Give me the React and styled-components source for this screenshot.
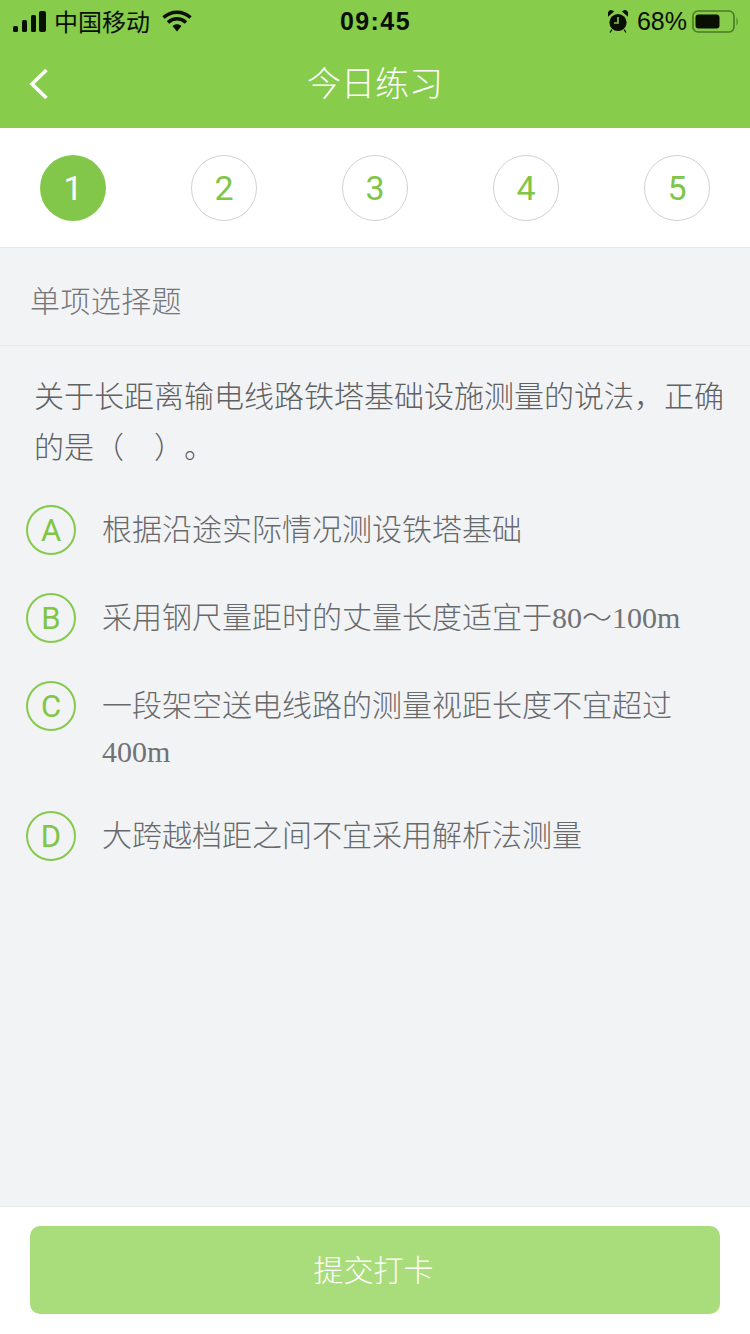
import React from "react";
import styled, { createGlobalStyle } from "styled-components";

const Global = createGlobalStyle`
  html, body { margin: 0; padding: 0; background: #f2f3f5; }
  * { box-sizing: border-box; }
  body { font-family: "Noto Sans CJK SC", "Liberation Sans", sans-serif; }
`;
const Page = styled.div`
  width: 750px; height: 1334px; display: flex; flex-direction: column; background: #f2f3f5; overflow: hidden;
`;
const Header = styled.header`
  height: 128px; background: #87cc4b; display: flex; flex-direction: column; flex: none;
`;
const StatusBar = styled.div`
  height: 40px; padding: 2px 12px 0 13px; display: flex; align-items: center; justify-content: space-between; color: #0a0f04;
`;
const StatusSide = styled.div`
  width: 300px; display: flex; align-items: center; gap: 5px; justify-content: ${p => p.$end ? "flex-end" : "flex-start"};
`;
const Carrier = styled.span`
  font-size: 24px; line-height: 32px; margin: 0 7px 0 3px;
`;
const Clock = styled.span`
  font-family: "Liberation Sans", sans-serif; font-size: 25px; font-weight: 700; letter-spacing: 1.4px; line-height: 32px;
`;
const Percent = styled.span`
  font-family: "Liberation Sans", sans-serif; font-size: 25px; line-height: 32px; margin-left: 4px;
`;
const NavBar = styled.div`
  height: 88px; display: grid; grid-template-columns: 100px 1fr 100px; align-items: center;
`;
const Back = styled.div`
  padding-left: 28px; display: flex; align-items: center; height: 40px;
`;
const Title = styled.h1`
  margin: -4px 0 0; text-align: center; color: #fff; font-size: 34px; font-weight: 300; line-height: 44px;
`;
const Steps = styled.nav`
  height: 120px; flex: none; background: #fff; border-bottom: 1px solid #e8e9eb; padding: 27px 40px 0; display: flex; justify-content: space-between; align-items: flex-start;
`;
const Step = styled.div`
  width: 66px; height: 66px; border-radius: 50%;
  display: flex; align-items: center; justify-content: center;
  font-family: Roboto, "Liberation Sans", sans-serif; font-size: 34px; font-weight: 400;
  background: ${p => p.$active ? "#82c64a" : "#fff"};
  color: ${p => p.$active ? "#fff" : "#80c546"};
  border: ${p => p.$active ? "none" : "1px solid #cfd1cf"};
`;
const SectionHead = styled.div`
  height: 98px; flex: none; border-bottom: 1px solid #e9eaec; padding: 5px 31px 0 30px; display: flex; align-items: center;
  font-size: 30px; font-weight: 300; color: #747678; letter-spacing: 0.4px;
`;
const Body = styled.main`
  flex: 1; padding: 23px 26px 0; display: flex; flex-direction: column;
`;
const Question = styled.p`
  margin: 0 -10px 34px 0; padding-left: 8px; font-size: 30px; line-height: 51px; font-weight: 300; color: #5f6163; text-spacing-trim: space-all;
`;
const Options = styled.ul`
  list-style: none; margin: 0; padding: 0; display: flex; flex-direction: column; gap: 38px;
`;
const Option = styled.li`
  display: flex; align-items: flex-start; gap: 26px;
`;
const Letter = styled.span`
  width: 50px; height: 50px; flex: none; border-radius: 50%; border: 2px solid #85ca4c; color: #80c546;
  display: flex; align-items: center; justify-content: center;
  font-family: Roboto, "Liberation Sans", sans-serif; font-size: 31px; font-weight: 400;
`;
const OptionText = styled.span`
  font-family: "Liberation Serif", "Noto Sans CJK SC", serif; font-size: 30px; line-height: 46px; color: #707274; width: 590px; padding-top: 2px; margin-bottom: -2px;
`;
const Cjk = styled.span`
  font-family: "Noto Sans CJK SC", sans-serif; font-weight: 300; line-height: 1; color: #67696b;
`;
const Footer = styled.footer`
  height: 128px; flex: none; background: #fff; border-top: 1px solid #e9eaec; padding: 19px 30px 0;
`;
const Submit = styled.button`
  width: 690px; height: 88px; padding: 0 3px 4px 0; border: none; border-radius: 10px; background: #a9dc7a; color: #fff; font-family: "Noto Sans CJK SC", sans-serif; font-size: 30px; font-weight: 300; display: block;
`;

const Signal = () => (
  <svg width="33" height="21" viewBox="0 0 33 21" fill="#0a0f04">
    <rect x="0" y="15" width="5" height="6" rx="1.5" />
    <rect x="9" y="9" width="5" height="12" rx="1.5" />
    <rect x="18" y="4" width="5" height="17" rx="1.5" />
    <rect x="26" y="0" width="7" height="21" rx="2" />
  </svg>
);
const Wifi = () => (
  <svg width="30" height="22" viewBox="0 0 30 22">
    <path d="M1.5 7.5C9.5 .5 20.5 .5 28.5 7.5M6 12.5C11.5 7.5 18.5 7.5 24 12.5" fill="none" stroke="#0a0f04" strokeWidth="3.6" />
    <path d="M10.5 16C13 13.8 17 13.8 19.5 16L15 21.5Z" fill="#0a0f04" />
  </svg>
);
const Alarm = () => (
  <svg width="20" height="23" viewBox="0 0 20 23">
    <circle cx="10" cy="12.5" r="8.6" fill="#0a0f04" />
    <path d="M.5 5.5 5 1.5 2.5.5 0 2.8ZM19.5 5.5 15 1.5 17.5.5 20 2.8ZM4 19.5 2 22.5M16 19.5 18 22.5" fill="#0a0f04" stroke="#0a0f04" strokeWidth="1.3" />
    <path d="M10 7v6H6" fill="none" stroke="#87cc4b" strokeWidth="1.6" />
  </svg>
);
const Battery = () => (
  <svg width="46" height="23" viewBox="0 0 46 23">
    <rect x="1" y="1" width="41" height="21" rx="5" fill="none" stroke="#4a7a25" strokeWidth="1.6" />
    <rect x="3.5" y="4.5" width="24" height="14" rx="3" fill="#0a0f04" />
    <path d="M44.5 7.5c1.5 1 1.5 7 0 8z" fill="#4a7a25" />
  </svg>
);
const Chevron = () => (
  <svg width="22" height="34" viewBox="0 0 22 34">
    <path d="M18.5 3 4 17l14.5 14" fill="none" stroke="#fff" strokeWidth="3.6" />
  </svg>
);

const options = [
  { key: "A", text: <Cjk>根据沿途实际情况测设铁塔基础</Cjk> },
  { key: "B", text: <><Cjk>采用钢尺量距时的丈量长度适宜于</Cjk>80<Cjk>～</Cjk>100m</> },
  { key: "C", text: <><Cjk>一段架空送电线路的测量视距长度不宜超过</Cjk><br />400m</> },
  { key: "D", text: <Cjk>大跨越档距之间不宜采用解析法测量</Cjk> },
];

export default function App() {
  return (
    <Page>
      <Global />
      <Header>
        <StatusBar>
          <StatusSide>
            <Signal />
            <Carrier>中国移动</Carrier>
            <Wifi />
          </StatusSide>
          <Clock>09:45</Clock>
          <StatusSide $end>
            <Alarm />
            <Percent>68%</Percent>
            <Battery />
          </StatusSide>
        </StatusBar>
        <NavBar>
          <Back><Chevron /></Back>
          <Title>今日练习</Title>
        </NavBar>
      </Header>
      <Steps>
        {[1, 2, 3, 4, 5].map(n => <Step key={n} $active={n === 1}>{n}</Step>)}
      </Steps>
      <SectionHead>单项选择题</SectionHead>
      <Body>
        <Question>关于长距离输电线路铁塔基础设施测量的说法，正确的是（　）。</Question>
        <Options>
          {options.map(o => (
            <Option key={o.key}>
              <Letter>{o.key}</Letter>
              <OptionText>{o.text}</OptionText>
            </Option>
          ))}
        </Options>
      </Body>
      <Footer><Submit>提交打卡</Submit></Footer>
    </Page>
  );
}
